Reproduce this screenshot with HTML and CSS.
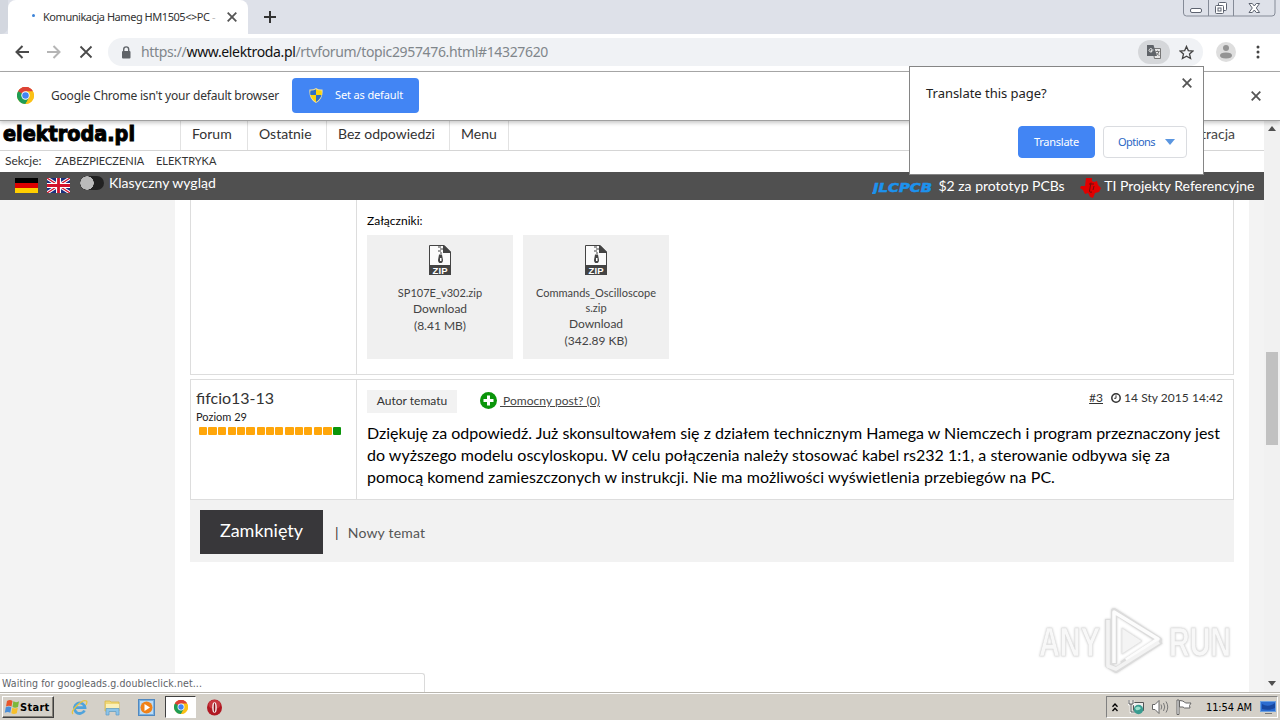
FILE: index.html
```
<!DOCTYPE html>
<html lang="pl">
<head>
<meta charset="utf-8">
<title>Komunikacja Hameg HM1505&lt;&gt;PC</title>
<link rel="stylesheet" href="styles.css">
</head>
<body>
<svg width="0" height="0" class="defs">
  <defs>
    <symbol id="chrome" viewBox="0 0 24 24">
      <circle cx="12" cy="12" r="12" fill="#fbc116"/>
      <path d="M12 12 1.6 6A12 12 0 0 1 22.4 6z" fill="#dd4236"/>
      <path d="M12 6h10.4A12 12 0 0 0 1.6 6L6.8 15z" fill="#dd4236"/>
      <path d="M1.6 6A12 12 0 0 0 12 24l5.2-9L12 12z" fill="#1f9d55"/>
      <path d="M12 24A12 12 0 0 0 22.4 6H12l5.2 9z" fill="#fbc116"/>
      <circle cx="12" cy="12" r="5.9" fill="#fff"/>
      <circle cx="12" cy="12" r="4.6" fill="#4285f4"/>
    </symbol>
    <symbol id="cross" viewBox="0 0 10 10"><path d="M.7.7l8.600 8.600M9.300.7.7 9.300" stroke="currentColor" stroke-width="1.8" fill="none"/></symbol>
    <symbol id="zip" viewBox="0 0 22 30">
      <path d="M.5 20V.5H15L21.5 7v13" fill="#fbfbfb" stroke="#444"/>
      <path d="M14 0h1l7 7v1h-8z" fill="#444"/>
      <path d="M9 2h3M11 4h3M9 6h3M11 8h2" stroke="#444" stroke-width="1.2"/>
      <path d="M10 9.500h3l1 5.500a2 2.500 0 0 1-5 0z" fill="#444"/>
      <path d="M11 13h1.500v3H11z" fill="#fff"/>
      <path d="M0 20h22v10H0z" fill="#444"/>
      <text x="11" y="28.6" text-anchor="middle" textLength="15" class="zip-label">ZIP</text>
    </symbol>
  </defs>
</svg>

<header class="tabstrip">
  <div class="prev-tab"></div>
  <div class="tab">
    <i class="spinner"></i>
    <span class="tab-title">Komunikacja Hameg HM1505&lt;&gt;PC <em>-</em></span>
    <svg class="x10 tab-close"><use href="#cross"/></svg>
  </div>
  <svg class="new-tab" viewBox="0 0 12 12"><path d="M6 0v12M0 6h12" stroke="#333" stroke-width="2"/></svg>
  <div class="win-buttons">
    <svg viewBox="0 0 93 17" width="93" height="17" fill="none" stroke="#5d6370">
      <path d="M.5-1V13q0 3 3 3H89q3 0 3-3V-1M25.500 0v16M50.500 0v16" stroke="#858b97"/>
      <rect x="7.500" y="8.500" width="11" height="4" rx="1.500" fill="#fff"/>
      <rect x="35.500" y="2.500" width="8" height="8" rx="1" fill="#fff"/>
      <rect x="32.500" y="5.500" width="8" height="8" rx="1" fill="#fff"/>
      <rect x="35" y="8" width="3" height="3"/>
      <path d="M66 3.500h3.300l2 2.500 2-2.500h3.300L73.300 8l3.300 4.500h-3.300l-2-2.500-2 2.500H66L69.300 8z" fill="#fff"/>
    </svg>
  </div>
</header>

<nav class="toolbar">
  <svg class="nav back" viewBox="0 0 14 14"><path d="M14 7H1.500M7.500 1 1.500 7l6 6" stroke="#4a4a4a" stroke-width="2" fill="none"/></svg>
  <svg class="nav fwd" viewBox="0 0 14 14"><path d="M0 7h12.500M6.500 1l6 6-6 6" stroke="#b5b5b5" stroke-width="2" fill="none"/></svg>
  <svg class="nav stop" viewBox="0 0 14 14"><path d="M1.500 1.500l11 11M12.500 1.500l-11 11" stroke="#4a4a4a" stroke-width="1.800" fill="none"/></svg>
  <div class="omnibox">
    <svg class="lock" viewBox="0 0 10 13"><rect x="1" y="5" width="8.500" height="7.500" rx="1" fill="#5f6368"/><path d="M2.700 6V3.400a2.500 2.500 0 0 1 5 0V6" fill="none" stroke="#5f6368" stroke-width="1.400"/></svg>
    <span class="url">https://<b>www.elektroda.pl</b>/rtvforum/topic2957476.html#14327620</span>
    <span class="translate-pill">
      <svg viewBox="0 0 14 14" width="14" height="14"><path d="M5.500 3.500h8v10h-6z" fill="#e6e6e6" stroke="#777"/><path d="M0 0h6.500l3.500 11H0z" fill="#5f6368"/><path d="M6.500 5H4.200v1.300h1A1.700 1.700 0 1 1 4.900 4" stroke="#eee" fill="none"/><path d="M8.500 6.500h4M10.500 5.500v1M12 6.500q-1 3-3 4M9.500 8l3 3" stroke="#777" fill="none"/></svg>
    </span>
    <svg class="star" viewBox="0 0 14 14"><path d="M7 1.300l1.700 3.900 4.300.4-3.200 2.800 1 4.200L7 10.400l-3.800 2.200 1-4.200L1 5.600l4.300-.4z" fill="none" stroke="#444" stroke-width="1.200"/></svg>
  </div>
  <svg class="avatar" viewBox="0 0 20 20"><circle cx="10" cy="10" r="10" fill="#dedede"/><circle cx="10" cy="6" r="3" fill="#949494"/><path d="M4 13.500q0-3 6-3t6 3-6 3-6-3z" fill="#949494"/></svg>
  <svg class="dots" viewBox="0 0 4 14"><g fill="#444"><circle cx="2" cy="2" r="1.500"/><circle cx="2" cy="7" r="1.500"/><circle cx="2" cy="12" r="1.500"/></g></svg>
</nav>

<div class="infobar">
  <svg class="chrome-lg"><use href="#chrome"/></svg>
  <span class="info-text">Google Chrome isn't your default browser</span>
  <div class="btn-default">
    <svg viewBox="0 0 14 15" width="14" height="15"><path d="M7 0q3 2 6.500 1.500 1 9.500-6.500 13.500Q-.5 11 .5 1.500 4 2 7 0z" fill="#f5e29a"/><path d="M7 1.200V7H1.400Q1 4.500 1.500 2.600 4.500 2.800 7 1.200z" fill="#2f6fc4"/><path d="M7 1.200V7h5.600q.4-2.500-.1-4.400Q9.500 2.800 7 1.200z" fill="#fbd40c"/><path d="M1.500 7H7v6.900Q2.500 11.200 1.500 7z" fill="#fbd40c"/><path d="M12.500 7H7v6.900q4.500-2.700 5.500-6.900z" fill="#2f6fc4"/></svg>
    <span>Set as default</span>
  </div>
  <svg class="x10 info-close"><use href="#cross"/></svg>
</div>

<section class="viewport">
  <div class="page">
    <div class="site-top">
      <svg class="logo" width="138" height="28"><text x="3" y="20" textLength="132" lengthAdjust="spacingAndGlyphs">elektroda.pl</text></svg>
      <div class="menu"><a>Forum</a><a>Ostatnie</a><a>Bez odpowiedzi</a><a>Menu</a></div>
      <a class="register">Rejestracja</a>
    </div>
    <div class="sections"><span>Sekcje:</span><a>ZABEZPIECZENIA</a><a>ELEKTRYKA</a></div>
    <div class="darkbar">
      <svg class="flag" viewBox="0 0 23 15"><path d="M0 0h23v5H0z"/><path d="M0 5h23v5H0z" fill="#d00"/><path d="M0 10h23v5H0z" fill="#ffce00"/></svg>
      <svg class="flag uk" viewBox="0 0 23 15"><path d="M0 0h23v15H0z" fill="#1b2f7e"/><path d="M0 0l23 15M23 0 0 15" stroke="#fff" stroke-width="3.200"/><path d="M0 0l23 15M23 0 0 15" stroke="#d3112b" stroke-width="1.200"/><path d="M11.500 0v15M0 7.500h23" stroke="#fff" stroke-width="5"/><path d="M11.500 0v15M0 7.500h23" stroke="#d3112b" stroke-width="2.800"/></svg>
      <i class="toggle"></i>
      <span class="classic">Klasyczny wygląd</span>
      <svg class="jlc" width="62" height="14"><text x="1" y="11.500" textLength="59" lengthAdjust="spacingAndGlyphs">JLCPCB</text></svg>
      <span>$2 za prototyp PCBs</span>
      <svg class="ti" viewBox="0 0 21 20"><path d="M6 0h6v3l2 1 3-1 1 4 3 3-2 4-4 1-2 5-3-1-2-4-3 1-2-4-3-2 1-2h4z" fill="#e00000"/><path d="M9 6h5M11 4.500 9.500 13q0 2 2.500 1M14 8l-1 4" stroke="#700c0c" stroke-width="1" fill="none"/></svg>
      <span>TI Projekty Referencyjne</span>
    </div>
    <main class="content">
      <article class="post first">
        <div class="author"></div>
        <div class="body">
          <p class="att-title">Załączniki:</p>
          <div class="attachments">
            <div class="att"><svg><use href="#zip"/></svg><small>SP107E_v302.zip</small><span>Download</span><span class="size">(8.41 MB)</span></div>
            <div class="att"><svg><use href="#zip"/></svg><small>Commands_Oscilloscope<br>s.zip</small><span>Download</span><span class="size">(342.89 KB)</span></div>
          </div>
        </div>
      </article>
      <article class="post second">
        <div class="author">
          <div class="nick">fifcio13-13</div>
          <div class="level">Poziom 29</div>
          <div class="bars">
            <div><i></i><i></i><i></i></div><div><i></i><i></i><i></i></div><div><i></i><i></i><i></i></div><div><i></i><i></i><i></i></div><div><i></i><i></i><i class="on"></i></div>
          </div>
        </div>
        <div class="body">
          <div class="meta">
            <span class="badge">Autor tematu</span>
            <svg class="plus" viewBox="0 0 17 17"><circle cx="8.500" cy="8.500" r="8.500" fill="#0a950a"/><path d="M8.500 3.500v10M3.500 8.500h10" stroke="#fff" stroke-width="3"/></svg>
            <u class="helpful">&nbsp;Pomocny post? (0)</u>
            <u class="num">#3</u>
            <svg class="clock" viewBox="0 0 10 10"><circle cx="5" cy="5" r="4.200" fill="none" stroke="#333" stroke-width="1.500"/><path d="M5 2.300v3H3.200" stroke="#333" fill="none"/></svg>
            <span>14 Sty 2015 14:42</span>
          </div>
          <p class="msg"><span>Dziękuję za odpowiedź. Już skonsultowałem się z działem technicznym Hamega w Niemczech i program przeznaczony jest</span><span class="mid">do wyższego modelu oscyloskopu. W celu połączenia należy stosować kabel rs232 1:1, a sterowanie odbywa się za</span><span>pomocą komend zamieszczonych w instrukcji. Nie ma możliwości wyświetlenia przebiegów na PC.</span></p>
        </div>
      </article>
      <div class="actions"><b>Zamknięty</b><span class="sep">|</span><span>Nowy temat</span></div>
    </main>
  </div>
  <div class="scrollbar">
    <svg width="8" height="5" viewBox="0 0 8 5"><path d="M0 5l4-5 4 5z" fill="#505050"/></svg>
    <i class="thumb"></i>
    <svg width="8" height="5" viewBox="0 0 8 5"><path d="M0 0l4 5 4-5z" fill="#505050"/></svg>
  </div>
  <div class="status">Waiting for googleads.g.doubleclick.net...</div>
  <svg class="watermark" width="212" height="72" viewBox="-4 -3 212 72">
    <g fill="none" stroke-linejoin="round">
      <path d="M79 56V3l45 29-37 24M73 11v46l8 5 45-29" stroke="#dcdcdc" stroke-width="6"/>
      <path d="M79 55V4l44 27-32 21" stroke="#fcfcfc" stroke-width="3.500"/>
      <path d="M73 12v46l8 3 43-27" stroke="#f3f3f3" stroke-width="3.500"/>
      <path d="M87 20v26l20-13z" fill="#f4f4f4" stroke="#e4e4e4"/>
    </g>
    <g class="wm-shadow"><text x="4" y="48" textLength="61" lengthAdjust="spacingAndGlyphs">ANY</text><text x="134" y="48" textLength="62" lengthAdjust="spacingAndGlyphs">RUN</text></g>
  </svg>
</section>

<div class="bubble">
  <svg class="x10 bubble-close"><use href="#cross"/></svg>
  <p>Translate this page?</p>
  <div class="bubble-actions">
    <span class="primary">Translate</span>
    <span class="options">Options <svg width="10" height="6" viewBox="0 0 10 6"><path d="M0 0h10L5 6z" fill="#5a96e0"/></svg></span>
  </div>
</div>

<footer class="taskbar">
  <div class="start">
    <svg viewBox="0 0 16 16" width="16" height="16"><path d="M3 2q3-2 5.500 0L7.500 7.500Q5 6 2 7.500z" fill="#e8562a"/><path d="M9.300 2.300Q12 4 15 2.200L14 8q-3 1.500-5.500 0z" fill="#7cb83a"/><path d="M1.800 8.300q3-1.500 5.500 0l-1 5.500q-2.500-1.500-5.500 0z" fill="#4a8ed8"/><path d="M8.300 8.800q2.500 1.500 5.500 0l-1 5.500q-3 1.500-5.500 0z" fill="#f7bf2a"/></svg>
    <span>Start</span>
  </div>
  <svg class="task ie" viewBox="0 0 17 17"><path d="M13.500 11.500A5.300 5.300 0 1 1 14 8.700H5" fill="none" stroke="#4fa3dc" stroke-width="2.800"/><path d="M2 15Q-.5 13 6 6.500T15.500 2q1 1-.5 4" fill="none" stroke="#e8c440" stroke-width="1.300"/></svg>
  <svg class="task folder" viewBox="0 0 17 17"><path d="M1 2h5l1 1h8v9H1z" fill="#f0d878" stroke="#d8b848" stroke-width=".8"/><path d="M2 5h13v4H2z" fill="#fbf0b8"/><path d="M2 16V9.500h13V16h-3v-3.500H5V16z" fill="#8cc4e8" stroke="#5c9cc8" stroke-width=".7"/></svg>
  <svg class="task media" viewBox="0 0 17 17"><rect x=".5" y=".5" width="16" height="16" fill="#78b0e0" stroke="#5088c0"/><path d="M2 2h13v13H2z" fill="#bcdcf6"/><circle cx="8.500" cy="8.500" r="6" fill="#f08218"/><path d="M6.500 5v7l5.500-3.500z" fill="#fff"/></svg>
  <div class="task-active"><svg width="14" height="14"><use href="#chrome"/></svg></div>
  <svg class="task opera" viewBox="0 0 17 17"><ellipse cx="8.500" cy="8.500" rx="7.500" ry="8" fill="#b01822"/><ellipse cx="8.500" cy="5.500" rx="6" ry="4.500" fill="#c83840"/><ellipse cx="8.500" cy="8.500" rx="2.300" ry="5.300" fill="#f8eeee"/><ellipse cx="8.500" cy="8.500" rx=".8" ry="4.500" fill="#8a1018"/></svg>
  <div class="tray">
    <svg class="chev" width="6" height="9" viewBox="0 0 6 9"><path d="M.5 3.800 3 1l2.500 2.800M.5 8 3 5.200 5.500 8" fill="none" stroke="#000" stroke-width="1.300"/></svg>
    <svg class="net" width="16" height="16" viewBox="0 0 16 16"><path d="M5.500 3.500h10v8h-10z" fill="#eee" stroke="#555"/><path d="M1 1v4h4V1M3 5v8h4" fill="none" stroke="#fff" stroke-width="2.600"/><path d="M1 1v4h4V1M3 5v8h4" fill="none" stroke="#555" stroke-width="1"/><circle cx="10.500" cy="10.500" r="4.700" fill="#3a9c90"/><path d="M7 9q3-3 6 0-2 3-5 2z" fill="#9ce0cc"/></svg>
    <svg class="vol" width="17" height="14" viewBox="0 0 17 14"><path d="M.5 4.500h2.500l4-4v13l-4-4H.5z" fill="#fff" stroke="#666"/><path d="M9 4.500q1.500 2.500 0 5M11.500 3q2.500 4 0 8M14 1.500q3.500 5.500 0 11" fill="none" stroke="#777"/></svg>
    <svg class="fl" width="16" height="16" viewBox="0 0 16 16"><path d="M1 1h2v14.500H1zM3.500 1.500q3 0 5 1.500l1 1h5.500l-1.500 2.500.5 2.500H8.500L7 8H3.500z" fill="#fff" stroke="#666"/></svg>
    <span>11:54 AM</span>
    <svg class="desk" width="16" height="13" viewBox="0 0 16 13"><rect x=".5" y=".5" width="15" height="10" fill="#2c6cd0" stroke="#6ca0e0"/><path d="M2 3q6 4 13-1v5q-6 3-13 1z" fill="#1848a0"/><path d="M5 12.500h7" stroke="#777"/></svg>
  </div>
</footer>
</body>
</html>
```
FILE: styles.css
```
* { box-sizing: border-box; }
body { margin: 0; width: 1280px; height: 720px; overflow: hidden; display: flex; flex-direction: column; position: relative; background: #fff; font-family: "Noto Sans", sans-serif; font-size: 11px; color: #333; }
p { margin: 0; }
svg { display: block; flex: none; }
span, a, u, b { white-space: nowrap; }
.defs { position: absolute; }
.x10 { width: 10px; height: 10px; color: #555; }

.tabstrip { height: 34px; flex: none; background: #dee1e9; display: flex; align-items: flex-start; }
.prev-tab { width: 8px; height: 34px; background: #d3d7df; border-radius: 0 0 7px 0; }
.tab { width: 240px; height: 34px; background: #fff; border-radius: 8px 8px 0 0; display: flex; align-items: center; padding-left: 24px; }
.spinner { width: 3px; height: 3px; border-radius: 2px; background: #3b83d8; margin: -4px 8px 0 0; }
.tab-title { width: 184px; letter-spacing: -.457px; margin-top: -2px; }
.tab-title em { color: #bbb; font-style: normal; }
.new-tab { width: 12px; height: 12px; margin: 11px 0 0 16px; }
.win-buttons { margin-left: auto; margin-right: 4px; }

.toolbar { height: 38px; flex: none; border-bottom: 1px solid #a9a9a9; display: flex; align-items: center; background: #fff; padding-bottom: 1px; }
.nav { width: 14px; height: 14px; }
.back { margin-left: 15px; }
.fwd { margin-left: 18px; }
.stop { margin-left: 18px; }
.omnibox { margin-left: 15px; width: 1095px; height: 28px; border-radius: 14px; background: #f0f2f5; display: flex; align-items: center; padding-left: 13px; }
.lock { width: 10px; height: 13px; }
.url { margin-left: 10px; font-size: 14px; letter-spacing: -.346px; color: #80868b; width: 997px; margin-top: -1px; }
.url b { font-weight: normal; color: #111; }
.translate-pill { width: 32px; height: 24px; border-radius: 12px; background: #d5d7da; display: flex; align-items: center; justify-content: center; }
.star { width: 15px; height: 15px; margin-left: 9px; }
.avatar { width: 20px; height: 20px; margin-left: 13px; }
.dots { width: 4px; height: 14px; margin-left: 20px; }

.infobar { height: 49px; flex: none; background: #fff; display: flex; align-items: center; position: relative; z-index: 2; border-bottom: 1px solid #a0a0a0; box-shadow: 0 2px 4px rgba(0,0,0,.22); padding-bottom: 1px; }
.chrome-lg { width: 17px; height: 17px; margin-left: 17px; }
.info-text { margin-left: 17px; width: 241px; font-size: 12px; letter-spacing: -.197px; }
.btn-default { width: 127px; height: 35px; border-radius: 4px; background: #4285f4; color: #fff; display: flex; align-items: center; padding-left: 17px; gap: 12px; letter-spacing: -.136px; }
.btn-default span { margin-top: -2px; }
.info-close { margin-left: auto; margin-right: 19px; }

.viewport { height: 571px; flex: none; display: flex; position: relative; overflow: hidden; }
.page { width: 1264px; font-family: Lato, sans-serif; }
.site-top { height: 30px; display: flex; border-bottom: 1px solid #d5d5d5; font-size: 14px; }
.logo { font: bold 21.500px "DejaVu Sans Condensed", sans-serif; fill: #000; stroke: #000; stroke-width: 1px; }
.menu { display: flex; margin-left: 42px; }
.menu a { border-left: 1px solid #e2e2e2; padding: 0 11px; line-height: 26px; width: 67px; }
.menu a:nth-child(2) { width: 79px; }
.menu a:nth-child(3) { width: 123px; }
.menu a:nth-child(4) { width: 60px; border-right: 1px solid #e2e2e2; }
.register { margin-left: auto; padding-right: 29px; line-height: 26px; color: #444; }
.sections { height: 21px; display: flex; font-size: 11px; line-height: 20px; padding-left: 5px; }
.sections span { width: 50px; font-size: 12px; }
.sections a { width: 101px; }
.darkbar { height: 28px; background: #505050; color: #fff; font-size: 14px; display: flex; line-height: 28px; padding-left: 15px; }
.flag { width: 23px; height: 15px; margin-top: 6px; }
.uk { margin-left: 9px; }
.toggle { width: 24px; height: 14px; border-radius: 7px; margin: 4px 0 0 10px; background: radial-gradient(circle at 7px 7px, #bbb 6.5px, #222 7px); }
.classic { margin-left: 5px; line-height: 22px; }
.jlc { margin: 8px 4px 0 auto; font: italic bold 12px "DejaVu Sans", sans-serif; fill: #1c92ee; stroke: #1c92ee; stroke-width: .5px; }
.ti { width: 21px; height: 20px; margin: 6px 3.500px 0 15px; }
.darkbar > span:last-child { padding-right: 9.500px; }

.content { height: 492px; background: #fff; border-left: 175px solid #f3f3f3; border-right: 15px solid #f3f3f3; padding: 0 15px; }
.post { display: flex; border: 1px solid #ddd; }
.author { width: 166px; border-right: 1px solid #ddd; padding: 8px 0 0 5px; }
.body { flex: 1; padding-left: 10px; color: #000; }
.first { height: 175px; border-top: 0; }
.att-title { font-size: 12px; line-height: 16px; padding-top: 13px; }
.attachments { display: flex; gap: 10px; margin-top: 6px; }
.att { width: 146px; height: 124px; background: #f0f0f0; display: flex; flex-direction: column; align-items: center; text-align: center; padding-top: 10px; color: #444; font-size: 12px; line-height: 16px; }
.att svg { width: 22px; height: 30px; margin-bottom: 10px; }
.att small { font-size: 11px; line-height: 15px; padding-bottom: 1px; }
.att .size { line-height: 17px; }
.zip-label { font: bold 9.500px "Liberation Sans", sans-serif; fill: #fff; }

.second { height: 121px; margin-top: 4px; }
.nick { font-size: 16px; line-height: 20px; }
.level { font-size: 11px; line-height: 15px; padding-top: 1px; color: #222; }
.bars { display: flex; gap: 2px; margin: 3px 0 0 3px; }
.bars div { display: flex; gap: 1px; width: 26.800px; }
.bars i { flex: 1; height: 8px; border-radius: 1px; background: #ffa60a; }
.bars .on { background: #0a950a; }
.meta { display: flex; align-items: center; height: 23px; margin-top: 10px; font-size: 12px; color: #333; padding-right: 10px; }
.badge { width: 90px; height: 23px; line-height: 22px; background: #f2f2f2; text-align: center; margin-right: 22.500px; }
.plus { width: 17px; height: 17px; margin-right: 3.500px; margin-top: -2px; }
.helpful { color: #444; margin-top: -2px; letter-spacing: .03px; }
.num { margin-left: auto; margin-right: 8px; margin-top: -8px; }
.clock { width: 10px; height: 10px; margin: -7px 3px 0 0; }
.meta > span:last-child { margin-top: -8px; letter-spacing: .043px; }
.msg { margin-top: 9px; font-size: 16px; line-height: 22px; }
.msg span { display: block; }
.msg .mid { letter-spacing: .011px; }
.msg span:last-child { letter-spacing: .057px; }
.actions { height: 62px; background: #f2f2f2; display: flex; align-items: center; padding: 2px 0 0 10px; font-size: 14px; letter-spacing: .2px; color: #555; }
.actions b { width: 123px; height: 44px; background: #38373a; color: #fff; font-weight: normal; font-size: 18px; letter-spacing: 0; line-height: 41px; text-align: center; }
.sep { margin: 0 9px 0 12px; color: #333; }

.scrollbar { width: 16px; background: #f1f1f1; display: flex; flex-direction: column; align-items: center; padding: 5px 0 6px; }
.thumb { width: 12px; height: 93px; margin: 221px 0 auto; background: #c1c1c1; }
.status { position: absolute; left: -1px; bottom: 0; width: 426px; height: 19px; border: 1px solid #dadada; border-bottom: 0; border-radius: 0 3px 0 0; background: #fff; font: 10.500px/18px "DejaVu Sans Condensed", sans-serif; letter-spacing: .098px; padding-left: 2px; color: #606368; white-space: nowrap; }
.watermark { position: absolute; left: 1031px; top: 484px; filter: drop-shadow(0 0 1px #d0d0d0); }
.wm-shadow { font: bold 41px "Liberation Sans", sans-serif; fill: #f8f8f8; stroke: #e0e0e0; stroke-width: .7px; }

.bubble { position: absolute; z-index: 5; left: 909px; top: 66px; width: 295px; height: 109px; background: #fff; border: 1px solid #858585; padding: 16px; color: #222; }
.bubble p { font-size: 13px; line-height: 20px; color: #222; letter-spacing: -.03px; }
.bubble-close { position: absolute; right: 11px; top: 11px; }
.bubble-actions { display: flex; justify-content: flex-end; gap: 8px; margin-top: 23px; line-height: 30px; }
.primary { width: 77px; height: 32px; border: 1px solid #4285f4; background: #4285f4; color: #fff; border-radius: 4px; text-align: center; letter-spacing: -.257px; }
.options { width: 84px; height: 32px; border: 1px solid #dadce0; border-radius: 4px; color: #2b66c4; display: flex; align-items: center; padding-left: 14px; gap: 10px; letter-spacing: -.556px; }

.taskbar { height: 28px; flex: none; background: #d4d0c8; border-top: 1px solid #b9b6af; box-shadow: inset 0 1px #fff; display: flex; align-items: center; padding-top: 1px; font-family: "DejaVu Sans Condensed", sans-serif; color: #000; }
.start { width: 52px; height: 22px; margin-left: 2px; border: 1px solid; border-color: #fff #404040 #404040 #fff; box-shadow: inset -1px -1px #858179; display: flex; align-items: center; padding-left: 1px; font-weight: bold; letter-spacing: .3px; }
.task { width: 17px; height: 17px; }
.ie { margin-left: 17px; }
.folder { margin-left: 16px; }
.media { margin-left: 17px; }
.task-active { width: 31px; height: 22px; margin: 0 10px 0 10px; background: #fff; border: 1px solid; border-color: #404040 #fff #fff #404040; display: flex; align-items: center; justify-content: center; }
.tray { width: 172px; height: 22px; margin: 0 2px 0 auto; border: 1px solid; border-color: #808080 #fff #fff #808080; display: flex; align-items: center; padding-left: 5px; }
.net { margin-left: 10px; }
.vol { margin-left: 8px; }
.fl { margin-left: 7px; }
.tray span { margin-left: 14px; width: 54px; letter-spacing: -.12px; }
```
